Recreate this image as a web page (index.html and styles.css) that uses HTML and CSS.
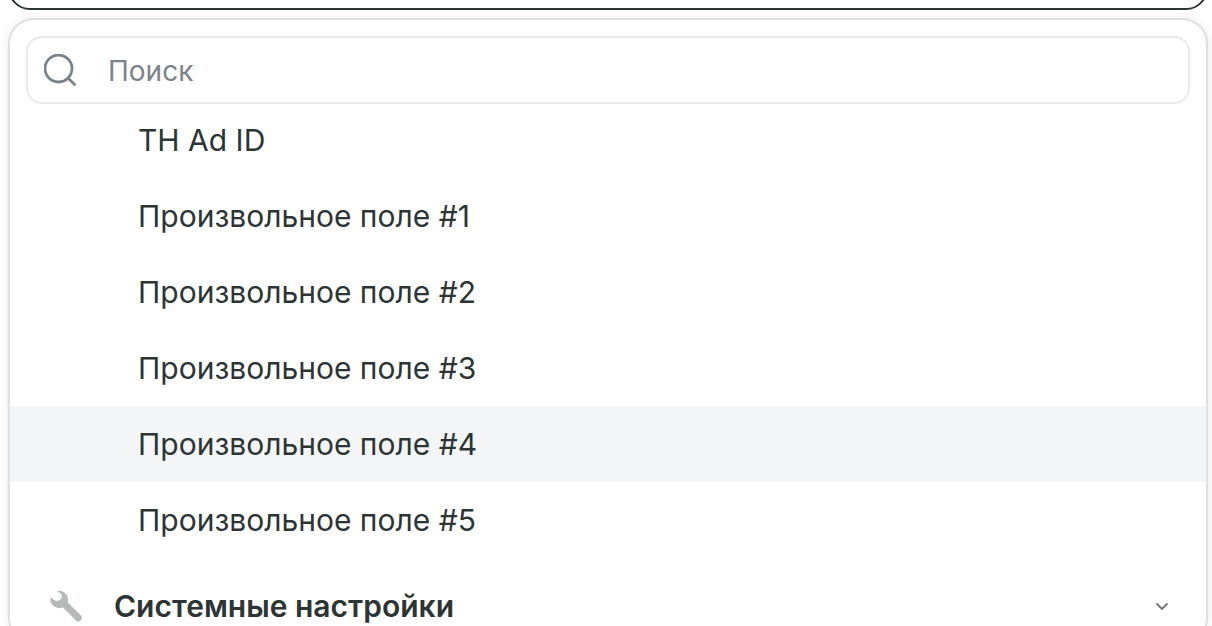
FILE: index.html
```html
<!DOCTYPE html>
<html lang="ru">
  <head>
    <meta charset="UTF-8" />
    <meta name="viewport" content="width=device-width, initial-scale=1.0" />
    <title>Выбор поля</title>
    <link rel="stylesheet" href="styles.css">
  </head>
  <body>
    <div class="field">
      <button type="button" class="field-button" aria-label="Выбор поля" aria-expanded="true"></button>
    </div>

    <div class="dropdown">
      <label class="search">
        <svg class="search-icon" viewBox="0 0 32 32" fill="none" aria-hidden="true">
          <circle cx="14.5" cy="14.500" r="13.500" />
          <path d="M24.500 24.500l6 6" />
        </svg>
        <input type="text" class="search-input" placeholder="Поиск" aria-label="Поиск" />
      </label>

      <div class="options">
        <button type="button" class="option">TH Ad ID</button>
        <button type="button" class="option">Произвольное поле #1</button>
        <button type="button" class="option">Произвольное поле #2</button>
        <button type="button" class="option">Произвольное поле #3</button>
        <button type="button" class="option active">Произвольное поле #4</button>
        <button type="button" class="option">Произвольное поле #5</button>
      </div>

      <button type="button" class="group">
        <svg class="group-icon" viewBox="0 0 32 32" aria-hidden="true">
          <path d="M7 1.200A8.700 8.700 0 0 1 17.600 12.300L30.700 25.300a3.500 3.500 0 0 1-5 5L12.600 17.200A8.700 8.700 0 0 1 .6 7.300l3.100 2.500c2.200 1.700 5 1.400 6.800-.3 1.900-1.800 1.900-4.400.2-6.100z" />
        </svg>
        <span class="group-title">Системные настройки</span>
        <svg class="chevron" viewBox="0 0 12 8" fill="none" aria-hidden="true">
          <path d="M.5 1.500l5.500 5.500 5.500-5.500" />
        </svg>
      </button>
    </div>
  </body>
</html>
```

FILE: styles.css
```css
* {
  box-sizing: border-box;
}

body {
  margin: 0;
  padding: 0 4px 0 8px;
  height: 100vh;
  overflow: hidden;
  background-color: white;
  color: #2d3534;
  font-family: Inter, 'Liberation Sans', sans-serif;
  font-size: 30px;
}

button {
  font: inherit;
  color: inherit;
  text-align: left;
  border: none;
  background: none;
  cursor: pointer;
}

/* only the lower edge of the field stays in view */
.field {
  display: flex;
  align-items: flex-end;
  height: 10px;
}

.field-button {
  flex: 1;
  height: 68px;
  border: 2px solid #2d3534;
  border-radius: 22px;
}

.dropdown {
  margin-top: 8px;
  border: 2px solid #dfe0e1;
  border-radius: 26px;
  background-color: white;
  box-shadow: 0 0 10px rgba(30, 40, 60, 0.1);
  overflow: hidden;
}

.search {
  display: flex;
  align-items: center;
  gap: 32px;
  height: 68px;
  margin: 16px 16px 0;
  padding: 0 16px;
  border: 2px solid #e8e9e9;
  border-radius: 16px;
}

.search-icon {
  width: 32px;
  height: 32px;
  stroke: #7b838a;
  stroke-width: 2.8;
  stroke-linecap: round;
}

.search-input {
  flex: 1;
  min-width: 0;
  padding: 2px 0 0;
  border: none;
  outline: none;
  background: none;
  font: inherit;
  font-size: 28px;
  color: inherit;
}

.search-input::placeholder {
  color: #7b838a;
  opacity: 1;
}

.options {
  display: flex;
  flex-direction: column;
  margin-top: -2px;
}

.option {
  height: 76px;
  padding: 0 128px;
}

.option.active {
  background-color: #f4f5f7;
}

.group {
  display: flex;
  align-items: center;
  width: 100%;
  height: 72px;
  margin-top: 12px;
  padding: 0 38px 0 40px;
}

.group-icon {
  width: 32px;
  height: 32px;
  margin-right: 32px;
  fill: #b5b9b8;
}

.group-title {
  flex: 1;
  font-weight: 600;
}

.chevron {
  width: 12px;
  height: 8px;
  stroke: #6b737a;
  stroke-width: 1.8;
}
```
